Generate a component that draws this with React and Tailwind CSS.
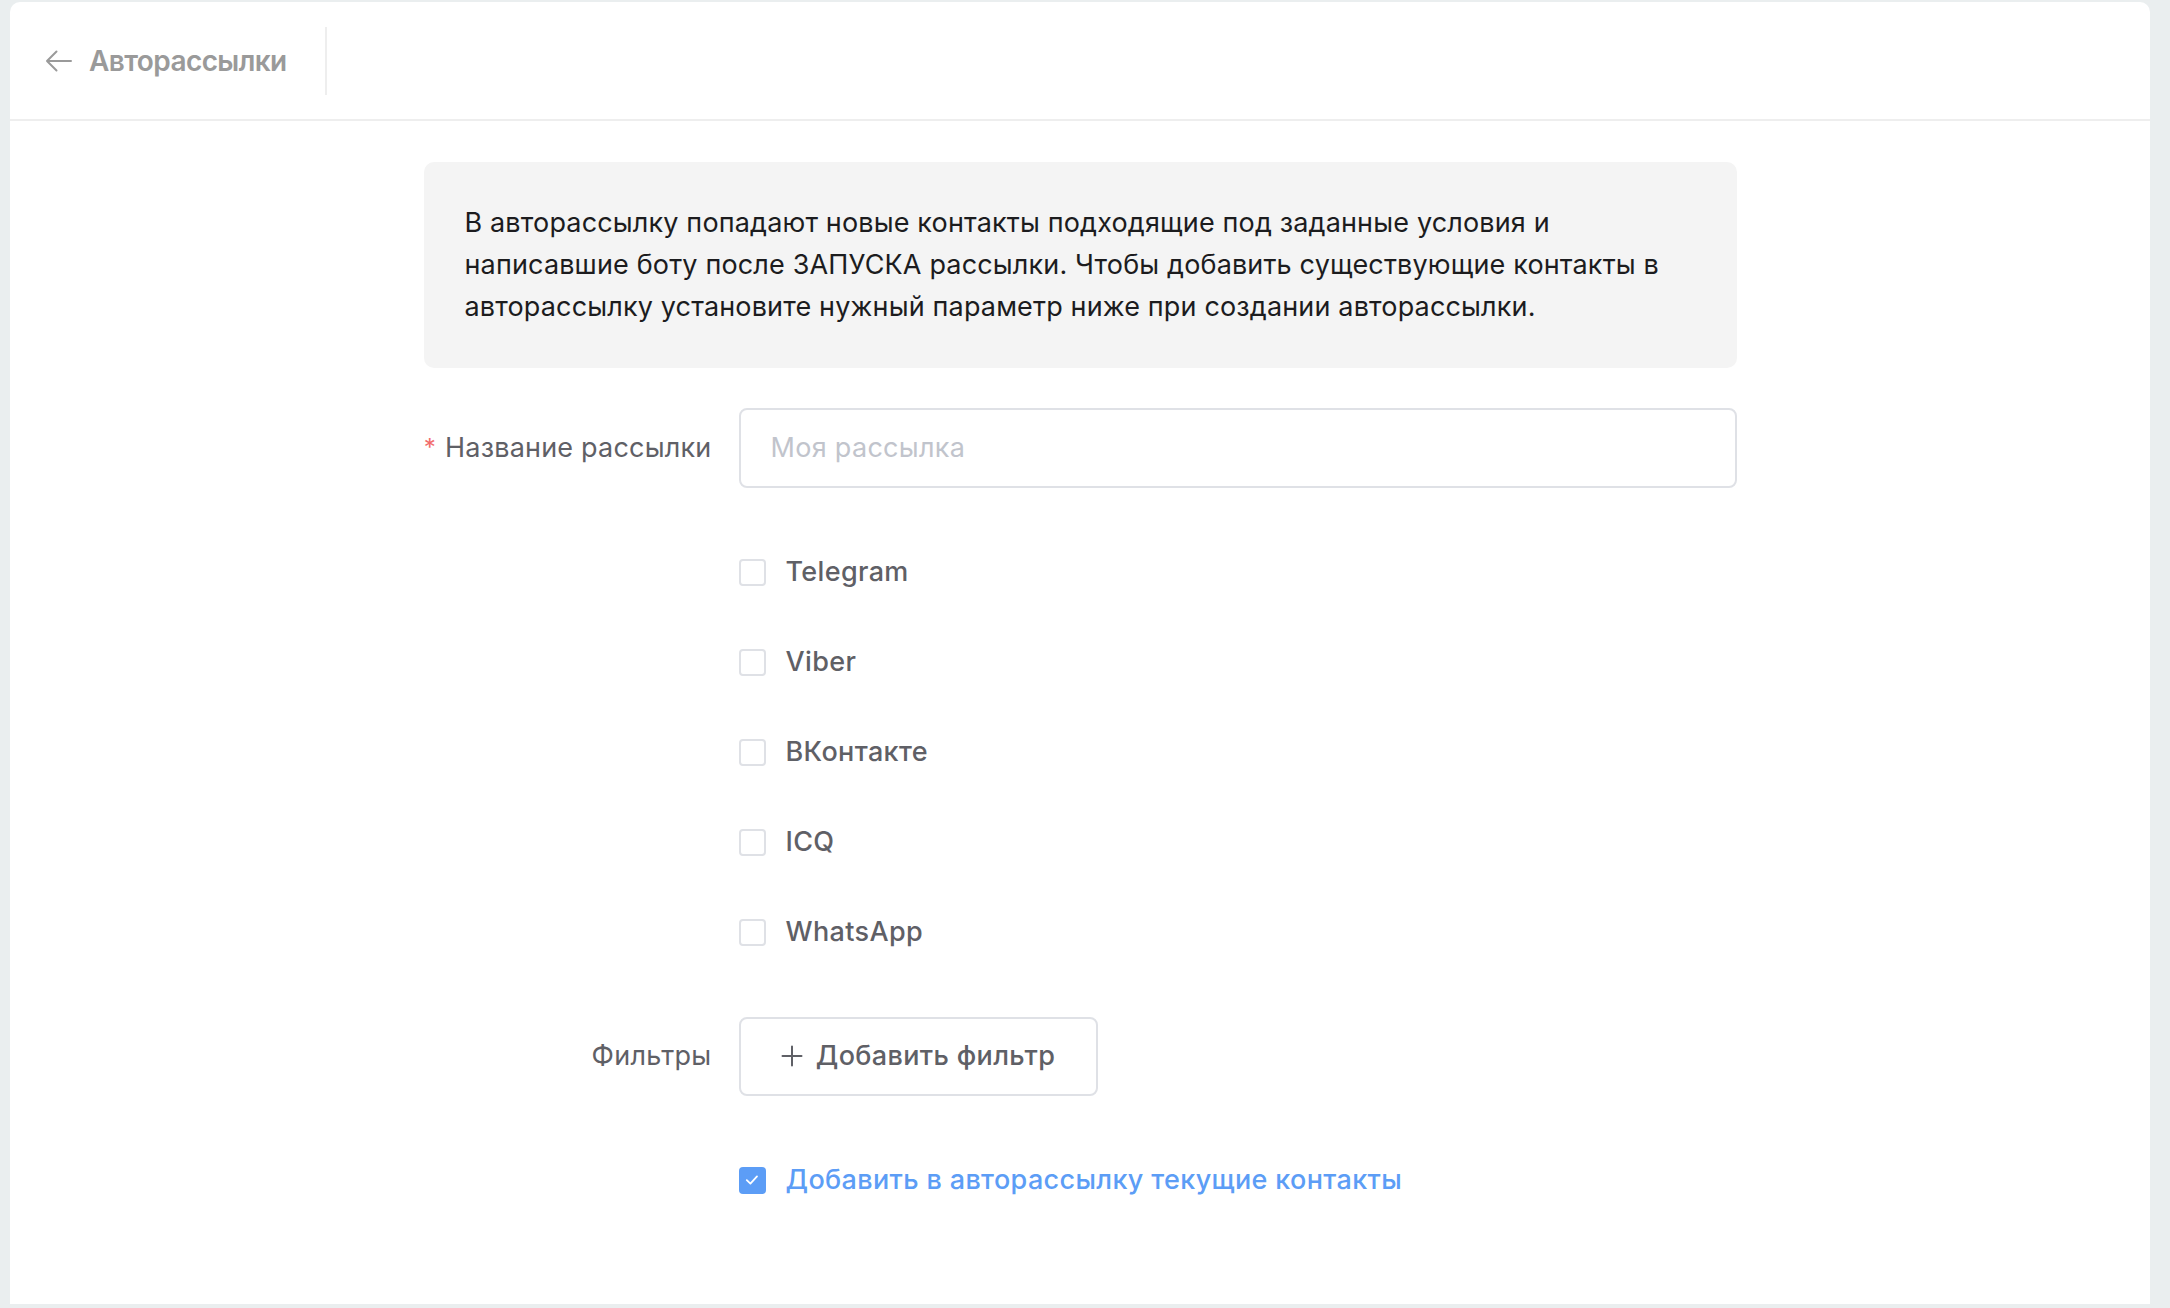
import React from "react";

const font = { fontFamily: "Inter, 'Noto Sans', sans-serif" };

function Checkbox({ checked, label }) {
  return (
    <div className="flex items-center h-[80px]">
      {checked ? (
        <span className="w-[27px] h-[27px] rounded-[4px] bg-[#5c9df6] flex items-center justify-center">
          <svg width="18" height="18" viewBox="0 0 18 18" fill="none">
            <path d="M3.8 9.2 L7.4 12.6 L14 5.4" stroke="white" strokeWidth="1.8" strokeLinecap="round" strokeLinejoin="round" />
          </svg>
        </span>
      ) : (
        <span className="w-[27px] h-[27px] rounded-[4px] border-2 border-[#dfe1e6] bg-white" />
      )}
      <span
        className={
          "ml-[20px] text-[27px] font-medium tracking-[0.35px] " +
          (checked ? "text-[#5c9df6]" : "text-[#5f6066]")
        }
      >
        {label}
      </span>
    </div>
  );
}

export default function App() {
  return (
    <div className="min-h-screen bg-[#eaeeef] pl-[10px] pr-[20px] pt-[2px]" style={font}>
      <div className="bg-white rounded-t-[10px] h-[1302px] flex flex-col">
        <div className="h-[119px] border-b-2 border-[#eeeeee] flex items-center pl-[35px] shrink-0">
          <svg width="27" height="22" viewBox="0 0 27 22" fill="none">
            <path d="M26 11 H2 M11.5 1.5 L2 11 L11.5 20.5" stroke="#9a9a9a" strokeWidth="2" strokeLinecap="round" strokeLinejoin="round" />
          </svg>
          <span className="ml-[17px] text-[28px] font-semibold text-[#9a9a9a] tracking-[-0.6px]">Авторассылки</span>
          <div className="ml-[38px] w-[2px] h-[68px] bg-[#eeeeee]" />
        </div>

        <div className="w-[1313px] mx-auto pt-[41px]">
          <div className="h-[206px] bg-[#f4f4f4] rounded-[10px] pl-[41px] pr-[30px] flex items-center">
            <p className="text-[27px] leading-[42px] text-[#1c1c1e] tracking-[0.15px] whitespace-nowrap">
              В авторассылку попадают новые контакты подходящие под заданные условия и
              <br />
              написавшие боту после ЗАПУСКА рассылки. Чтобы добавить существующие контакты в
              <br />
              авторассылку установите нужный параметр ниже при создании авторассылки.
            </p>
          </div>

          <div className="mt-[40px] flex items-center h-[80px]">
            <label className="w-[315px] shrink-0 pr-[27px] flex justify-end items-center text-[27px] text-[#5f6066] tracking-[0.2px] whitespace-nowrap">
              <span className="text-[#f26c6c] text-[24px] mr-[9px]">*</span>
              Название рассылки
            </label>
            <div className="flex-1 h-[80px] border-2 border-[#dfe1e6] rounded-[8px] flex items-center pl-[30px] text-[27px] text-[#c1c4cc] tracking-[0.3px]">
              Моя рассылка
            </div>
          </div>

          <div className="mt-[44px] pl-[315px] flex flex-col gap-[10px]">
            <Checkbox label="Telegram" />
            <Checkbox label="Viber" />
            <Checkbox label="ВКонтакте" />
            <Checkbox label="ICQ" />
            <Checkbox label="WhatsApp" />
          </div>

          <div className="mt-[44px] flex items-center h-[80px]">
            <label className="w-[315px] shrink-0 pr-[27px] text-right text-[27px] text-[#5f6066] tracking-[0.3px] whitespace-nowrap">Фильтры</label>
            <button className="w-[359px] h-[79px] border-2 border-[#dfe1e6] rounded-[8px] flex items-center justify-center text-[27px] font-medium text-[#5f6066] bg-white tracking-[0.35px]">
              <svg width="22" height="22" viewBox="0 0 22 22" fill="none" className="mr-[13px]">
                <path d="M11 1.5 V20.5 M1.5 11 H20.5" stroke="#5f6066" strokeWidth="2" strokeLinecap="round" />
              </svg>
              Добавить фильтр
            </button>
          </div>

          <div className="mt-[44px] pl-[315px]">
            <Checkbox checked label="Добавить в авторассылку текущие контакты" />
          </div>
        </div>
      </div>
    </div>
  );
}
